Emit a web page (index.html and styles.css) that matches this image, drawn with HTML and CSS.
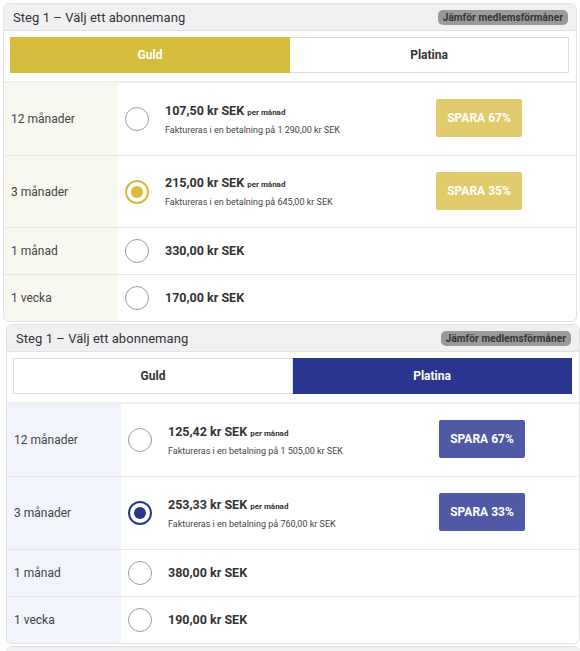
FILE: index.html
```html
<!DOCTYPE html>
<html lang="sv">
<head>
<meta charset="utf-8">
<link rel="stylesheet" href="styles.css">
</head>
<body>
<div class="stack">
  <section class="card gold">
    <header class="card-head">
      <span class="title">Steg 1 – Välj ett abonnemang</span>
      <span class="compare">Jämför medlemsförmåner</span>
    </header>
    <div class="tabs">
      <div class="tab active">Guld</div>
      <div class="tab">Platina</div>
    </div>
    <div class="row tall">
      <div class="label">12 månader</div>
      <div class="opt">
        <span class="radio"></span>
        <div class="price">
          <div class="main">107,50 kr SEK <small>per månad</small></div>
          <div class="sub">Faktureras i en betalning på 1 290,00 kr SEK</div>
        </div>
        <span class="save">SPARA 67%</span>
      </div>
    </div>
    <div class="row tall t2">
      <div class="label">3 månader</div>
      <div class="opt">
        <span class="radio on"></span>
        <div class="price">
          <div class="main">215,00 kr SEK <small>per månad</small></div>
          <div class="sub">Faktureras i en betalning på 645,00 kr SEK</div>
        </div>
        <span class="save">SPARA 35%</span>
      </div>
    </div>
    <div class="row">
      <div class="label">1 månad</div>
      <div class="opt">
        <span class="radio"></span>
        <div class="price"><div class="main">330,00 kr SEK</div></div>
      </div>
    </div>
    <div class="row last">
      <div class="label">1 vecka</div>
      <div class="opt">
        <span class="radio"></span>
        <div class="price"><div class="main">170,00 kr SEK</div></div>
      </div>
    </div>
  </section>

  <section class="card plat shifted">
    <header class="card-head">
      <span class="title">Steg 1 – Välj ett abonnemang</span>
      <span class="compare">Jämför medlemsförmåner</span>
    </header>
    <div class="tabs">
      <div class="tab">Guld</div>
      <div class="tab active">Platina</div>
    </div>
    <div class="row tall">
      <div class="label">12 månader</div>
      <div class="opt">
        <span class="radio"></span>
        <div class="price">
          <div class="main">125,42 kr SEK <small>per månad</small></div>
          <div class="sub">Faktureras i en betalning på 1 505,00 kr SEK</div>
        </div>
        <span class="save">SPARA 67%</span>
      </div>
    </div>
    <div class="row tall">
      <div class="label">3 månader</div>
      <div class="opt">
        <span class="radio on"></span>
        <div class="price">
          <div class="main">253,33 kr SEK <small>per månad</small></div>
          <div class="sub">Faktureras i en betalning på 760,00 kr SEK</div>
        </div>
        <span class="save">SPARA 33%</span>
      </div>
    </div>
    <div class="row">
      <div class="label">1 månad</div>
      <div class="opt">
        <span class="radio"></span>
        <div class="price"><div class="main">380,00 kr SEK</div></div>
      </div>
    </div>
    <div class="row last">
      <div class="label">1 vecka</div>
      <div class="opt">
        <span class="radio"></span>
        <div class="price"><div class="main">190,00 kr SEK</div></div>
      </div>
    </div>
  </section>

  <section class="card next shifted">
    <header class="card-head"></header>
  </section>
</div>
</body>
</html>
```

FILE: styles.css
```css
* { box-sizing: border-box; }
html, body { margin: 0; padding: 0; background: #ffffff; }
body {
  font-family: Roboto, "Liberation Sans", Arial, sans-serif;
  color: #333;
  overflow: hidden;
  width: 580px;
  height: 651px;
}
.stack {
  display: flex;
  flex-direction: column;
  gap: 2px;
  padding-top: 3px;
}
.card {
  width: 574px;
  margin-left: 3px;
  border: 1px solid #e2e2e2;
  border-radius: 6px;
  overflow: hidden;
  background: #fff;
  flex-shrink: 0;
}
.card.shifted { margin-left: 6px; }
.card-head {
  height: 27px;
  background: #f0f0f2;
  border-bottom: 1px solid #e2e2e4;
  display: flex;
  align-items: center;
  justify-content: space-between;
  padding: 0 8px 0 9px;
}
.title {
  font-size: 13px;
  color: #333;
  letter-spacing: 0.05px;
}
.compare {
  background: #9a9a9a;
  color: #333;
  font-size: 10px;
  font-weight: 700;
  padding: 2px 5px;
  border-radius: 5px;
  line-height: 11px;
  letter-spacing: 0.1px;
}
.tabs {
  display: flex;
  padding: 6px 7px 8px 6px;
  border-bottom: 2px solid #f0f0f0;
}
.tab {
  flex: 1;
  height: 36px;
  display: flex;
  align-items: center;
  justify-content: center;
  font-size: 12px;
  font-weight: 700;
  color: #333;
  border: 1px solid #dddddd;
  background: #fff;
}
.tab + .tab { border-left: none; }
.gold .tab.active { background: #d6bc3c; border-color: #d6bc3c; color: #fff; }
.plat .tab.active { background: #2a3590; border-color: #2a3590; color: #fff; }

.row {
  display: flex;
  height: 47px;
  border-bottom: 1px solid #e6e6e6;
}
.row.tall { height: 73px; }
.row.tall.t2 { height: 72px; }
.row.last { border-bottom: none; height: 46px; }
.label {
  width: 114px;
  flex-shrink: 0;
  display: flex;
  align-items: center;
  padding-left: 7px;
  font-size: 12px;
  color: #444;
}
.gold .label { background: #f8f8f0; }
.plat .label { background: #f1f5fb; }
.opt {
  flex: 1;
  display: flex;
  align-items: center;
  padding-left: 7px;
}
.radio {
  width: 24px;
  height: 24px;
  border-radius: 50%;
  border: 1.5px solid #9a9a9a;
  flex-shrink: 0;
  display: flex;
  align-items: center;
  justify-content: center;
}
.gold .radio.on { border: 2px solid #d6bc3c; }
.gold .radio.on::after {
  content: "";
  width: 12px; height: 12px; border-radius: 50%; background: #d6bc3c;
}
.plat .radio.on { border: 2px solid #2a3590; }
.plat .radio.on::after {
  content: "";
  width: 12px; height: 12px; border-radius: 50%; background: #2a3590;
}
.price {
  flex: 1;
  padding-left: 16px;
}
.main {
  font-size: 12.5px;
  font-weight: 700;
  color: #333;
  line-height: 16px;
}
.main small {
  font-size: 8px;
  font-weight: 700;
}
.sub {
  font-size: 9px;
  color: #444;
  line-height: 12px;
  margin-top: 3px;
}
.save {
  width: 86px;
  height: 38px;
  border-radius: 2px;
  display: flex;
  align-items: center;
  justify-content: center;
  color: #fff;
  font-size: 12px;
  font-weight: 700;
  margin-right: 54px;
  margin-top: -2px;
}
.gold .save { background: #e2cb6c; }
.plat .save { background: #5059a6; }
.card.next { height: 20px; }
```
